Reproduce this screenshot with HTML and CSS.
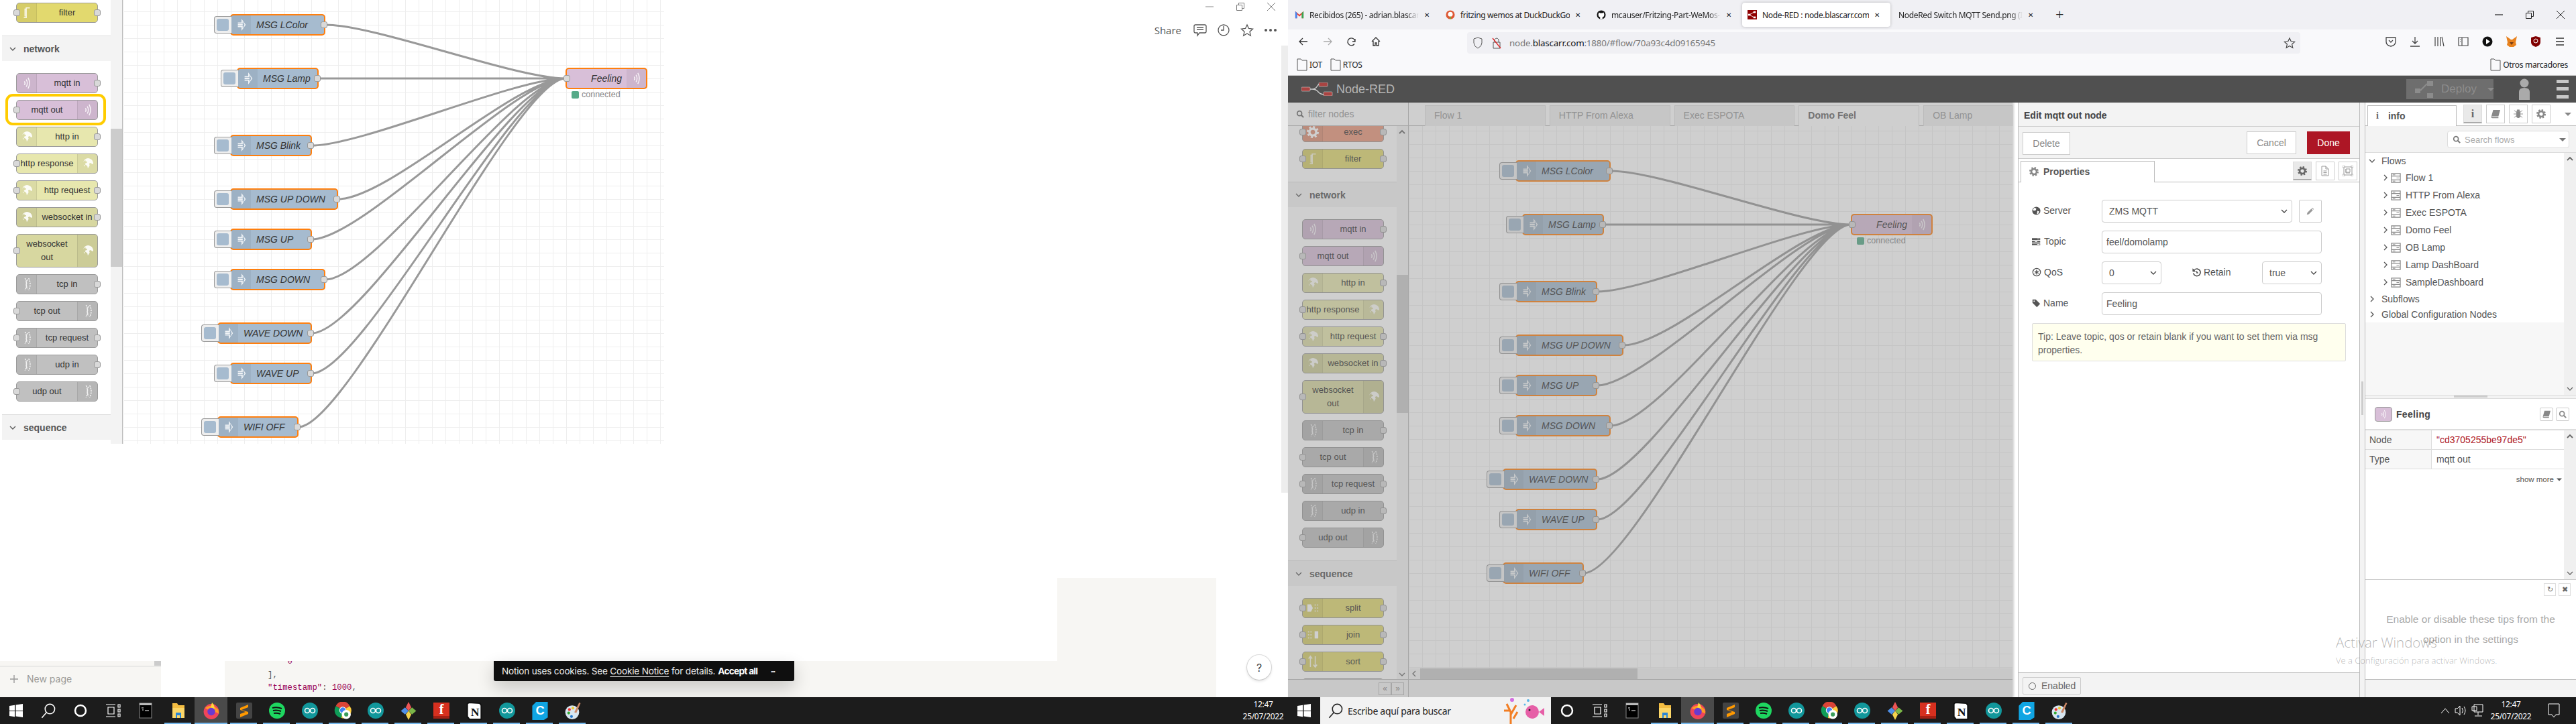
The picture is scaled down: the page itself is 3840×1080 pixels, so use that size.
FILE: index.html
```html
<!DOCTYPE html>
<html lang="en">
<head>
  <meta charset="UTF-8">
  <title>Node-RED : node.blascarr.com</title>
  <link rel="stylesheet" href="styles.css">
</head>
<body>
<svg class="defs" aria-hidden="true">
  <symbol id="wave" viewBox="0 0 20 30"><path d="M6 12q2 3 0 6M9 9q3.500 6 0 12M12 6q5 9 0 18" fill="none" stroke="#fff" stroke-width="1.600" opacity=".85"/></symbol>
  <symbol id="wave2" viewBox="0 0 20 30"><path d="M7 5q5 10 0 20M11 7q-4 8 0 16M13 5q5 10 0 20" fill="none" stroke="#fff" stroke-width="1.800" stroke-dasharray="2.500 1.500" opacity=".8"/></symbol>
  <symbol id="globe" viewBox="0 0 20 20"><path d="M10 1c5 0 9 4 9 9l-2 1-2-2-3 1 1 3-3 5-1-4-3-2-1-2 3-1 1-2-3-1 0-2q-3 2-4 5Q3 2 10 1zM3 12l2 1-1 2z" fill="#fff" opacity=".9"/></symbol>
  <symbol id="arrow" viewBox="0 0 20 30"><path d="M4 11h6V5l7 10-7 10v-6H4v-2h8v4l3-6-3-6v4H4z M4 14h8v2H4z" fill="#fff" opacity=".85"/></symbol>
  <symbol id="gear" viewBox="0 0 16 16"><circle cx="8" cy="8" r="4.500" fill="none" stroke="currentColor" stroke-width="3"/><circle cx="8" cy="8" r="6.500" fill="none" stroke="currentColor" stroke-width="3" stroke-dasharray="2.600 2.500"/></symbol>
  <symbol id="filt" viewBox="0 0 20 30"><path d="M5 23h4V7h6M9 9H7v12" fill="none" stroke="#fff" stroke-width="1.800" opacity=".8"/></symbol>
  <symbol id="splt" viewBox="0 0 20 20"><path d="M1 4h6l3 6-3 6H1z" fill="#fff"/><path d="M13 4h2v2h-2zM17 4h2v2h-2zM13 9h2v2h-2zM17 9h2v2h-2zM13 14h2v2h-2zM17 14h2v2h-2z" fill="#fff" opacity=".7"/></symbol>
  <symbol id="join" viewBox="0 0 20 20"><path d="M19 4h-6v12h6z" fill="#fff"/><path d="M2 4h2v2H2zM6 4h2v2H6zM2 9h2v2H2zM6 9h2v2H6zM2 14h2v2H2zM6 14h2v2H6z" fill="#fff" opacity=".7"/></symbol>
  <symbol id="sort" viewBox="0 0 20 30"><path d="M6 24V7M3 10l3-4 3 4M14 6v17M11 20l3 4 3-4" fill="none" stroke="#fff" stroke-width="1.800" opacity=".85"/></symbol>
  <symbol id="world" viewBox="0 0 16 16"><circle cx="8" cy="8" r="7.500" fill="currentColor"/><path d="M5 2l3 2-1 3-4 1-1-3zM10 8l3 1-1 4-3 1z" fill="#fff"/></symbol>
  <symbol id="tasks" viewBox="0 0 16 12"><path d="M0 0h14v3H0zM0 4.500h14v3H0zM0 9h14v3H0z" fill="currentColor"/><path d="M9 1h4v1H9zM5 5.500h4v1H5zM9 10h4v1H9z" fill="#fff"/></symbol>
  <symbol id="qos" viewBox="0 0 16 16"><circle cx="8" cy="8" r="6.500" fill="none" stroke="currentColor" stroke-width="1.500"/><path d="M8 4v8M4.500 6l7 4M11.500 6l-7 4" stroke="currentColor" stroke-width="1.600"/></symbol>
  <symbol id="hist" viewBox="0 0 16 16"><path d="M4 3a6.500 6.500 0 1 1-2 6" fill="none" stroke="currentColor" stroke-width="2"/><path d="M1 1v5h5z M8 5v4h3" fill="currentColor" stroke="currentColor" stroke-width="1"/></symbol>
  <symbol id="tag" viewBox="0 0 16 16"><path d="M1 1h6l8 8-6 6-8-8z" fill="currentColor"/><circle cx="4" cy="4" r="1.200" fill="#fff"/></symbol>
  <symbol id="pencil" viewBox="0 0 16 16"><path d="M1 15l1-4 8-8 3 3-8 8zM11 2l1-1 3 3-1 1z" fill="currentColor"/></symbol>
  <symbol id="doc" viewBox="0 0 14 16"><path d="M2 1h6l4 4v10H2zM8 1v4h4M4.500 8h5M4.500 10.500h5M4.500 13h5" fill="none" stroke="currentColor" stroke-width="1"/></symbol>
  <symbol id="frame" viewBox="0 0 16 16"><path d="M2 2h12v12H2zM5 5h6v5H5zM5 5v6h6" fill="none" stroke="currentColor" stroke-width="1"/><path d="M0 0h3v3H0zM13 0h3v3h-3zM0 13h3v3H0zM13 13h3v3h-3z" fill="#fff" stroke="currentColor" stroke-width=".800"/></symbol>
  <symbol id="book" viewBox="0 0 16 14"><path d="M4 0h12l-3 11H1zM1 11q-1 3 2 3h10v-2H3z" fill="currentColor"/></symbol>
  <symbol id="bug" viewBox="0 0 16 16"><path d="M5 4h6v9q-3 3-6 0zM6 1h4v2H6zM1 2l4 3M15 2l-4 3M0 8h5M16 8h-5M1 14l4-3M15 14l-4-3" fill="currentColor" stroke="currentColor"/></symbol>
  <symbol id="mag" viewBox="0 0 14 14"><circle cx="6" cy="6" r="4" fill="none" stroke="currentColor" stroke-width="2"/><path d="M9 9l4 4" stroke="currentColor" stroke-width="2.400"/></symbol>
  <symbol id="chev" viewBox="0 0 10 10"><path d="M1 3l4 4 4-4" fill="none" stroke="currentColor" stroke-width="1.300"/></symbol>
  <symbol id="chevr" viewBox="0 0 10 10"><path d="M3 1l4 4-4 4" fill="none" stroke="currentColor" stroke-width="1.300"/></symbol>
  <symbol id="chevu" viewBox="0 0 10 10"><path d="M1 7l4-4 4 4" fill="none" stroke="currentColor" stroke-width="1.800"/></symbol>
  <symbol id="caret" viewBox="0 0 10 10"><path d="M0 3h10L5 8z" fill="currentColor"/></symbol>
  <symbol id="fnode" viewBox="0 0 16 16"><path d="M1 1h14v14H1zM1 5h14M1 11h14" fill="none" stroke="currentColor" stroke-width="1.300"/><path d="M3 3h4M9 8h4M3 13h4" stroke="currentColor"/></symbol>
  <symbol id="folder" viewBox="0 0 16 20"><path d="M1 2h5l2 2h7v15H1z" fill="none" stroke="#555" stroke-width="1"/></symbol>
  <symbol id="win" viewBox="0 0 20 20"><path d="M0 3l8-1.200V10H0zM9.500 1.600L20 0v10H9.500zM0 11h8v8.200L0 18zM9.500 11H20v9L9.500 18.400z" fill="#fff"/></symbol>
  <symbol id="srch" viewBox="0 0 20 20"><circle cx="12" cy="8" r="6" fill="none" stroke="currentColor" stroke-width="1.300"/><path d="M8 12l-6 7" stroke="currentColor" stroke-width="1.300"/></symbol>
  <symbol id="cortana" viewBox="0 0 20 20"><circle cx="10" cy="10" r="8" fill="none" stroke="#fff" stroke-width="2.500"/></symbol>
  <symbol id="taskview" viewBox="0 0 24 20"><path d="M2 1h14M2 19h14M5 5h9v10H5zM20 1h3v4h-3zM20 8h3v4h-3zM20 15h3v4h-3z" fill="none" stroke="#fff" stroke-width="1.200"/></symbol>
  <symbol id="cmd" viewBox="0 0 20 24"><rect x="1" y="1" width="18" height="22" fill="#000" stroke="#888"/><rect x="1" y="1" width="18" height="3" fill="#bbb"/><path d="M4 8h3M5 11h2M9 12h6" stroke="#fff"/></symbol>
  <symbol id="explorer" viewBox="0 0 20 24"><path d="M1 1h7l2 3h9v19H1z" fill="#f3bd42"/><path d="M1 8h18v15H1z" fill="#fbd668"/><path d="M6 15h8v8h-2v-4H8v4H6z" fill="#2a86d6"/></symbol>
  <symbol id="firefox" viewBox="0 0 24 26"><circle cx="12" cy="14" r="11" fill="#f0455a"/><path d="M3 9q9-8 19 2l1 6q-5-3-8-2z" fill="#ff9a24"/><path d="M13 1q5 5 3 10l-5-3z" fill="#ffd53a"/><circle cx="12" cy="14" r="5.500" fill="#6a3ad0"/></symbol>
  <symbol id="sublime" viewBox="0 0 24 24"><rect width="24" height="24" rx="2" fill="#444"/><path d="M6 10l12-5v4L8 13l10 3v3L6 24v-5l8-3-8-3z" fill="#f90" transform="translate(0 -2)"/></symbol>
  <symbol id="spotify" viewBox="0 0 24 24"><circle cx="12" cy="12" r="12" fill="#1ed760"/><path d="M5 8q7-2 14 1M6 12q6-1.500 12 1M7 16q5-1 10 1" fill="none" stroke="#111" stroke-width="2"/></symbol>
  <symbol id="arduino" viewBox="0 0 24 24"><circle cx="12" cy="12" r="12" fill="#12979b"/><circle cx="8" cy="12" r="3.500" fill="none" stroke="#fff" stroke-width="1.600"/><circle cx="16" cy="12" r="3.500" fill="none" stroke="#fff" stroke-width="1.600"/></symbol>
  <symbol id="chrome" viewBox="0 0 24 26"><path d="M12 12L2 6a11 11 0 0 1 20 0z" fill="#db4437"/><path d="M12 12L2 6a11 11 0 0 0 8 17z" fill="#0f9d58"/><path d="M12 12l10-6a11 11 0 0 1-12 17z" fill="#ffcd40"/><circle cx="12" cy="12" r="4.500" fill="#4285f4" stroke="#fff"/><circle cx="17" cy="18" r="6.500" fill="#fff"/><circle cx="17" cy="18" r="3" fill="#3a9c5a"/></symbol>
  <symbol id="git" viewBox="0 0 24 26"><path d="M12 0l4 8-4 5-4-5z" fill="#e55"/><path d="M12 13l5-5 6 5-6 5z" fill="#7ab648"/><path d="M12 13l-5-5-6 5 6 5z" fill="#4f90e8"/><path d="M12 13l4 5-4 8-4-8z" fill="#f5d34e"/></symbol>
  <symbol id="paint" viewBox="0 0 24 26"><ellipse cx="11" cy="15" rx="10" ry="10" fill="#d8e6f0"/><circle cx="7" cy="11" r="2" fill="#e33"/><circle cx="12" cy="9" r="2" fill="#ec3"/><circle cx="6" cy="16" r="2" fill="#3a3"/><circle cx="10" cy="21" r="2" fill="#27c"/><path d="M21 1l2 1-6 14-3-1z" fill="#c86"/></symbol>
  <symbol id="nrlogo" viewBox="0 0 47 20"><path d="M11 10h5q5 0 8-5t6-4M16 10q6 0 9 4t10 4" fill="none" stroke="#ccc" stroke-width="1.400"/><rect x="0" y="7" width="13" height="6" rx="1" fill="#a94442" stroke="#ccc" stroke-width=".600"/><rect x="26" y="0" width="13" height="6" rx="1" fill="#a94442" stroke="#ccc" stroke-width=".600"/><rect x="33" y="14" width="13" height="6" rx="1" fill="#a94442" stroke="#ccc" stroke-width=".600"/></symbol>
</svg>

<div class="screen">

  <!-- left half: notion window with the pasted picture -->
  <section class="half">
    <div class="left">
      <div class="left-upper">
        <div class="shot">
          <div class="palette">
            <div class="pal-body">
              <div class="pal-list">
                <div class="pal-group pal-first">
                  <div class="pn pn-filter"><span class="pn-ico"><svg class="ic28"><use href="#filt"/></svg></span><span class="pn-lab">filter</span><i class="port pl"></i><i class="port pr"></i></div>
                </div>
                <div class="pal-head"><svg class="ic10"><use href="#chev"/></svg>network</div>
                <div class="pal-group">
                  <div class="pn pn-mqtt"><span class="pn-ico"><svg class="ic28"><use href="#wave"/></svg></span><span class="pn-lab">mqtt in</span><i class="port pr"></i></div>
                  <div class="pn pn-mqtt pn-flip"><span class="pn-ico"><svg class="ic28"><use href="#wave"/></svg></span><span class="pn-lab">mqtt out</span><i class="port pl"></i></div>
                  <div class="pn pn-http"><span class="pn-ico"><svg class="ic20"><use href="#globe"/></svg></span><span class="pn-lab">http in</span><i class="port pr"></i></div>
                  <div class="pn pn-http pn-flip"><span class="pn-ico"><svg class="ic20"><use href="#globe"/></svg></span><span class="pn-lab">http response</span><i class="port pl"></i></div>
                  <div class="pn pn-http"><span class="pn-ico"><svg class="ic20"><use href="#globe"/></svg></span><span class="pn-lab">http request</span><i class="port pl"></i><i class="port pr"></i></div>
                  <div class="pn pn-ws"><span class="pn-ico"><svg class="ic20"><use href="#globe"/></svg></span><span class="pn-lab">websocket in</span><i class="port pr"></i></div>
                  <div class="pn pn-ws pn-flip pn-tall"><span class="pn-ico"><svg class="ic20"><use href="#globe"/></svg></span><span class="pn-lab">websocket<br>out</span><i class="port pl"></i></div>
                  <div class="pn pn-tcp"><span class="pn-ico"><svg class="ic28"><use href="#wave2"/></svg></span><span class="pn-lab">tcp in</span><i class="port pr"></i></div>
                  <div class="pn pn-tcp pn-flip"><span class="pn-ico"><svg class="ic28"><use href="#wave2"/></svg></span><span class="pn-lab">tcp out</span><i class="port pl"></i></div>
                  <div class="pn pn-tcp"><span class="pn-ico"><svg class="ic28"><use href="#wave2"/></svg></span><span class="pn-lab">tcp request</span><i class="port pl"></i><i class="port pr"></i></div>
                  <div class="pn pn-tcp"><span class="pn-ico"><svg class="ic28"><use href="#wave2"/></svg></span><span class="pn-lab">udp in</span><i class="port pr"></i></div>
                  <div class="pn pn-tcp pn-flip"><span class="pn-ico"><svg class="ic28"><use href="#wave2"/></svg></span><span class="pn-lab">udp out</span><i class="port pl"></i></div>
                </div>
                <div class="pal-head"><svg class="ic10"><use href="#chev"/></svg>sequence</div>
              </div>
              <div class="pal-scroll"><span class="pal-thumb pal-thumb-l"></span></div>
            </div>
          </div>
          <div class="flow-wrap flow-wrap-l">
            <div class="flow flow-white">
              <svg class="wires" width="900" height="809">
                <path d="M301 67C376 67 584 147 659 147M291 147H659M281 247C356 247 584 147 659 147M320 327C395 327 584 147 659 147M281 387C356 387 584 147 659 147M301 447C376 447 584 147 659 147M281 527C356 527 584 147 659 147M281 587C356 587 584 147 659 147M261 667C336 667 584 147 659 147"/>
              </svg>
              <div class="fn" style="left:159px;top:51px;width:142px"><b class="fn-btn"><i></i></b><span class="fn-ico"><svg class="ic28"><use href="#arrow"/></svg></span><span class="fn-lab">MSG LColor</span><i class="port pr"></i></div>
              <div class="fn" style="left:169px;top:131px;width:122px"><b class="fn-btn"><i></i></b><span class="fn-ico"><svg class="ic28"><use href="#arrow"/></svg></span><span class="fn-lab">MSG Lamp</span><i class="port pr"></i></div>
              <div class="fn" style="left:159px;top:231px;width:122px"><b class="fn-btn"><i></i></b><span class="fn-ico"><svg class="ic28"><use href="#arrow"/></svg></span><span class="fn-lab">MSG Blink</span><i class="port pr"></i></div>
              <div class="fn" style="left:159px;top:311px;width:161px"><b class="fn-btn"><i></i></b><span class="fn-ico"><svg class="ic28"><use href="#arrow"/></svg></span><span class="fn-lab">MSG UP DOWN</span><i class="port pr"></i></div>
              <div class="fn" style="left:159px;top:371px;width:122px"><b class="fn-btn"><i></i></b><span class="fn-ico"><svg class="ic28"><use href="#arrow"/></svg></span><span class="fn-lab">MSG UP</span><i class="port pr"></i></div>
              <div class="fn" style="left:159px;top:431px;width:142px"><b class="fn-btn"><i></i></b><span class="fn-ico"><svg class="ic28"><use href="#arrow"/></svg></span><span class="fn-lab">MSG DOWN</span><i class="port pr"></i></div>
              <div class="fn" style="left:140px;top:511px;width:141px"><b class="fn-btn"><i></i></b><span class="fn-ico"><svg class="ic28"><use href="#arrow"/></svg></span><span class="fn-lab">WAVE DOWN</span><i class="port pr"></i></div>
              <div class="fn" style="left:159px;top:571px;width:122px"><b class="fn-btn"><i></i></b><span class="fn-ico"><svg class="ic28"><use href="#arrow"/></svg></span><span class="fn-lab">WAVE UP</span><i class="port pr"></i></div>
              <div class="fn" style="left:140px;top:651px;width:121px"><b class="fn-btn"><i></i></b><span class="fn-ico"><svg class="ic28"><use href="#arrow"/></svg></span><span class="fn-lab">WIFI OFF</span><i class="port pr"></i></div>
              <div class="fn fn-out" style="left:659px;top:131px;width:122px"><span class="fn-lab">Feeling</span><span class="fn-ico"><svg class="ic28"><use href="#wave"/></svg></span><i class="port pl"></i></div>
              <div class="fn-status" style="left:668px;top:165px"><i></i>connected</div>
            </div>
          </div>
          <div class="mark"></div>
        </div>
        <div class="n-top">
          <div class="n-win">
            <svg width="16" height="16"><path d="M2 8h12" stroke="#888"/></svg>
            <svg width="16" height="16"><path d="M2.500 5.500h8v8h-8zM5.500 5V2.500h8v8H11" fill="none" stroke="#777"/></svg>
            <svg width="16" height="16"><path d="M2 2l12 12M14 2L2 14" stroke="#777"/></svg>
          </div>
          <div class="n-bar">
            <span class="n-share">Share</span>
            <svg width="20" height="20" viewBox="0 0 20 20"><path d="M3 2h14q2 0 2 2v8q0 2-2 2H9l-3 4v-4H3q-2 0-2-2V4q0-2 2-2zM5 6h10M5 9h10" fill="none" stroke="#555" stroke-width="1.300"/></svg>
            <svg width="20" height="20" viewBox="0 0 20 20"><circle cx="10" cy="10" r="8" fill="none" stroke="#555" stroke-width="1.300"/><path d="M10 4v6H6" fill="none" stroke="#555" stroke-width="1.300"/></svg>
            <svg width="20" height="20" viewBox="0 0 20 20"><path d="M10 2l2.500 5.500 6 .7-4.500 4 1.300 6L10 15l-5.300 3.200 1.300-6-4.500-4 6-.7z" fill="none" stroke="#555" stroke-width="1.300"/></svg>
            <svg width="20" height="20" viewBox="0 0 20 20"><circle cx="3" cy="10" r="2" fill="#555"/><circle cx="10" cy="10" r="2" fill="#555"/><circle cx="17" cy="10" r="2" fill="#555"/></svg>
          </div>
        </div>
      </div>
      <div class="left-mid"><span class="n-box"></span></div>
      <div class="left-lower">
        <div class="n-side">
          <div class="n-side-top"><span></span></div>
          <div class="n-new"><svg width="14" height="14"><path d="M7 1v12M1 7h12" stroke="#999" stroke-width="1.400"/></svg>New page</div>
        </div>
        <div class="n-code"><code class="mag">    0</code><code>],</code><code><span class="mag">"timestamp"</span>: <span class="mag">1000</span>,</code></div>
      </div>
      <div class="n-cookie">Notion uses cookies. See <u>Cookie Notice</u> for details.<b>Accept all</b><em>•••</em></div>
      <div class="n-help">?</div>
      <div class="n-scroll"></div>
    </div>
    <div class="taskbar">
      <span class="tb tb-w"><svg class="t20"><use href="#win"/></svg></span>
      <span class="tb tb-w tb-w-s"><svg class="t24"><use href="#srch"/></svg></span>
      <span class="tb tb-w"><svg class="t20"><use href="#cortana"/></svg></span>
      <span class="tb tb-w"><svg class="t24"><use href="#taskview"/></svg></span>
      <span class="tb"><svg class="t24"><use href="#cmd"/></svg></span>
      <span class="tb on"><svg class="t24"><use href="#explorer"/></svg></span>
      <span class="tb on act"><svg class="t26"><use href="#firefox"/></svg></span>
      <span class="tb on"><svg class="t24"><use href="#sublime"/></svg></span>
      <span class="tb on"><svg class="t24"><use href="#spotify"/></svg></span>
      <span class="tb on"><svg class="t24"><use href="#arduino"/></svg></span>
      <span class="tb on"><svg class="t26"><use href="#chrome"/></svg></span>
      <span class="tb on"><svg class="t24"><use href="#arduino"/></svg></span>
      <span class="tb on"><svg class="t26"><use href="#git"/></svg></span>
      <span class="tb on"><svg class="t24" viewBox="0 0 24 24"><rect width="24" height="24" fill="#d7301f"/><rect y="20" width="24" height="4" fill="#a32014"/><text x="12" y="17" class="sy-f">f</text></svg></span>
      <span class="tb on"><svg class="t26" viewBox="0 0 24 26"><path d="M4 1l16 1 2 3v20H5L2 21V3z" fill="#fff" stroke="#111" stroke-width="2"/><text x="13" y="20" class="sy-n">N</text></svg></span>
      <span class="tb on"><svg class="t24"><use href="#arduino"/></svg></span>
      <span class="tb on"><svg class="t26" viewBox="0 0 24 28"><path d="M6 0h18v24l-6 4H0V6z" fill="#10a5e3"/><text x="12" y="20" class="sy-c">C</text></svg></span>
      <span class="tb on"><svg class="t26"><use href="#paint"/></svg></span>
      <div class="clock clock-l"><span>12:47</span><span>25/07/2022</span></div>
    </div>
  </section>

  <!-- right half: firefox with node-red -->
  <section class="half half-r">
    <div class="ff-tabs">
      <div class="tab"><svg class="fav" viewBox="0 0 16 16"><path d="M1 14V2l7 6 7-6v12h-3V7L8 11 4 7v7z" fill="#ea4335"/><path d="M1 14V2l3 3v9z" fill="#4285f4"/><path d="M12 14V5l3-3v12z" fill="#34a853"/></svg><span class="tab-t">Recibidos (265) - adrian.blascar</span><span class="tab-x">✕</span></div>
      <div class="tab"><svg class="fav" viewBox="0 0 16 16"><circle cx="8" cy="8" r="7.500" fill="#de5833"/><circle cx="8" cy="7" r="4" fill="#fff"/><path d="M7 11h2v4H7z" fill="#6b3"/></svg><span class="tab-t tab-full">fritzing wemos at DuckDuckGo</span><span class="tab-x">✕</span></div>
      <div class="tab"><svg class="fav" viewBox="0 0 16 16"><circle cx="8" cy="8" r="7.500" fill="#111"/><path d="M6 15v-3q-3 0-3-5l1-3 2 1h4l2-1 1 3q0 5-3 5v3z" fill="#fff"/></svg><span class="tab-t">mcauser/Fritzing-Part-WeMos-D</span><span class="tab-x">✕</span></div>
      <div class="tab tab-on"><svg class="fav" viewBox="0 0 16 16"><rect width="16" height="16" fill="#8f0000"/><path d="M3 8l9-5M3 8l9 5" stroke="#fff"/><rect x="1" y="6.500" width="4" height="3" fill="#fff"/><rect x="10" y="2" width="4" height="3" fill="#fff"/><rect x="10" y="11" width="4" height="3" fill="#fff"/></svg><span class="tab-t tab-full">Node-RED : node.blascarr.com</span><span class="tab-x">✕</span></div>
      <div class="tab"><span class="tab-t">NodeRed Switch MQTT Send.png (In</span><span class="tab-x">✕</span></div>
      <span class="tab-add">+</span>
      <div class="ff-win">
        <svg width="16" height="16"><path d="M2 8h12" stroke="#222" stroke-width="1.200"/></svg>
        <svg width="16" height="16"><path d="M2.500 5.500h8v8h-8zM5.500 5V2.500h8v8H11" fill="none" stroke="#222"/></svg>
        <svg width="16" height="16"><path d="M2 2l12 12M14 2L2 14" stroke="#222"/></svg>
      </div>
    </div>
    <div class="ff-bar">
      <span class="ff-b"><svg width="16" height="16"><path d="M14 8H2M7 3L2 8l5 5" fill="none" stroke="#333" stroke-width="1.300"/></svg></span>
      <span class="ff-b"><svg width="16" height="16"><path d="M2 8h12M9 3l5 5-5 5" fill="none" stroke="#aaa" stroke-width="1.300"/></svg></span>
      <span class="ff-b"><svg width="16" height="16"><path d="M13 4v4H9M13 8a5.500 5.500 0 1 0-1 3.500" fill="none" stroke="#333" stroke-width="1.300"/></svg></span>
      <span class="ff-b"><svg width="16" height="16"><path d="M2 8l6-6 6 6M4 7v7h3v-4h2v4h3V7" fill="none" stroke="#333" stroke-width="1.300"/></svg></span>
      <div class="ff-url">
        <svg width="16" height="18" viewBox="0 0 16 18"><path d="M8 1l6 2v6q0 5-6 8-6-3-6-8V3z" fill="none" stroke="#555"/></svg>
        <svg width="16" height="18" viewBox="0 0 16 18"><path d="M3 8h10v9H3zM5 8V4q3-4 6 0v4" fill="none" stroke="#555"/><path d="M2 2l12 15" stroke="#d22" stroke-width="1.300"/></svg>
        <span class="ff-addr"><span class="ff-g">node.</span>blascarr.com<span class="ff-g">:1880/#flow/70a93c4d09165945</span></span>
        <svg class="ff-star" width="18" height="18" viewBox="0 0 20 20"><path d="M10 2l2.500 5.500 6 .7-4.500 4 1.300 6L10 15l-5.300 3.200 1.300-6-4.500-4 6-.7z" fill="none" stroke="#444" stroke-width="1.300"/></svg>
      </div>
      <div class="ff-exts">
        <span class="ff-b"><svg width="16" height="16"><path d="M1 2h14v6q0 6-7 7-7-1-7-7zM5 6l3 3 3-3" fill="none" stroke="#444" stroke-width="1.300"/></svg></span>
        <span class="ff-b"><svg width="16" height="16"><path d="M8 1v9M4 7l4 4 4-4M1 15h14" fill="none" stroke="#444" stroke-width="1.300"/></svg></span>
        <span class="ff-b"><svg width="16" height="16"><path d="M2 1v14M6 1v14M10 1v14M12 1l3 14" fill="none" stroke="#444" stroke-width="1.200"/></svg></span>
        <span class="ff-b"><svg width="16" height="16"><path d="M1 2h14v12H1zM6 2v12M3 5h1M3 8h1" fill="none" stroke="#444" stroke-width="1.200"/></svg></span>
        <span class="ff-b"><svg width="16" height="16"><circle cx="8" cy="8" r="7.500" fill="#111"/><path d="M6 4l6 4-6 4z" fill="#fff"/></svg></span>
        <span class="ff-b"><svg width="18" height="18"><path d="M1 1l7 5h2l7-5-2 9 1 4-4 3H6l-4-3 1-4z" fill="#e8821e"/><path d="M6 10l3 4 3-4z" fill="#763d16"/></svg></span>
        <span class="ff-b"><svg width="18" height="18"><path d="M9 1l7 2v7q0 5-7 7-7-2-7-7V3z" fill="#800000"/><circle cx="9" cy="8" r="3" fill="none" stroke="#fff"/></svg></span>
        <span class="ff-b"><svg width="16" height="16"><path d="M2 3h12M2 8h12M2 13h12" stroke="#333" stroke-width="1.300"/></svg></span>
      </div>
    </div>
    <div class="ff-marks">
      <span class="bm"><svg width="16" height="20"><use href="#folder"/></svg>IOT</span>
      <span class="bm"><svg width="16" height="20"><use href="#folder"/></svg>RTOS</span>
      <span class="bm bm-end"><svg width="16" height="20"><use href="#folder"/></svg>Otros marcadores</span>
    </div>

    <div class="nr-head">
      <svg class="nr-logo"><use href="#nrlogo"/></svg>
      <span class="nr-name">Node-RED</span>
      <div class="nr-deploy">
        <svg width="28" height="30" viewBox="0 0 28 30"><path d="M1 14h8v7H1zM19 3h9v7h-9zM19 21h9v7h-9z" fill="#8c8c8c"/><path d="M9 17l10-10" stroke="#8c8c8c" stroke-width="2"/></svg>
        <span>Deploy</span><svg class="ic10"><use href="#caret"/></svg>
      </div>
      <svg class="nr-user" width="18" height="36" viewBox="0 0 18 36"><circle cx="9" cy="9" r="6.500" fill="#aaa"/><path d="M1 34V22q0-6 8-6t8 6v12z" fill="#aaa"/></svg>
      <svg class="nr-menu" width="18" height="30" viewBox="0 0 18 30"><path d="M0 1h18v5H0zM0 12h18v5H0zM0 24h18v5H0z" fill="#c8c8c8"/></svg>
    </div>

    <div class="nr-main">
      <div class="workspace">
        <div class="palette palette-r">
          <div class="pal-search"><svg class="ic12"><use href="#mag"/></svg>filter nodes</div>
          <div class="pal-body">
            <div class="pal-list pal-list-r">
              <div class="pal-group pal-first">
                <div class="pn pn-exec"><span class="pn-ico"><svg class="ic20 white"><use href="#gear"/></svg></span><span class="pn-lab">exec</span><i class="port pl"></i><i class="port pr"></i></div>
                <div class="pn pn-filter"><span class="pn-ico"><svg class="ic28"><use href="#filt"/></svg></span><span class="pn-lab">filter</span><i class="port pl"></i><i class="port pr"></i></div>
              </div>
              <div class="pal-head"><svg class="ic10"><use href="#chev"/></svg>network</div>
              <div class="pal-group">
                <div class="pn pn-mqtt"><span class="pn-ico"><svg class="ic28"><use href="#wave"/></svg></span><span class="pn-lab">mqtt in</span><i class="port pr"></i></div>
                <div class="pn pn-mqtt pn-flip"><span class="pn-ico"><svg class="ic28"><use href="#wave"/></svg></span><span class="pn-lab">mqtt out</span><i class="port pl"></i></div>
                <div class="pn pn-http"><span class="pn-ico"><svg class="ic20"><use href="#globe"/></svg></span><span class="pn-lab">http in</span><i class="port pr"></i></div>
                <div class="pn pn-http pn-flip"><span class="pn-ico"><svg class="ic20"><use href="#globe"/></svg></span><span class="pn-lab">http response</span><i class="port pl"></i></div>
                <div class="pn pn-http"><span class="pn-ico"><svg class="ic20"><use href="#globe"/></svg></span><span class="pn-lab">http request</span><i class="port pl"></i><i class="port pr"></i></div>
                <div class="pn pn-ws"><span class="pn-ico"><svg class="ic20"><use href="#globe"/></svg></span><span class="pn-lab">websocket in</span><i class="port pr"></i></div>
                <div class="pn pn-ws pn-flip pn-tall"><span class="pn-ico"><svg class="ic20"><use href="#globe"/></svg></span><span class="pn-lab">websocket<br>out</span><i class="port pl"></i></div>
                <div class="pn pn-tcp"><span class="pn-ico"><svg class="ic28"><use href="#wave2"/></svg></span><span class="pn-lab">tcp in</span><i class="port pr"></i></div>
                <div class="pn pn-tcp pn-flip"><span class="pn-ico"><svg class="ic28"><use href="#wave2"/></svg></span><span class="pn-lab">tcp out</span><i class="port pl"></i></div>
                <div class="pn pn-tcp"><span class="pn-ico"><svg class="ic28"><use href="#wave2"/></svg></span><span class="pn-lab">tcp request</span><i class="port pl"></i><i class="port pr"></i></div>
                <div class="pn pn-tcp"><span class="pn-ico"><svg class="ic28"><use href="#wave2"/></svg></span><span class="pn-lab">udp in</span><i class="port pr"></i></div>
                <div class="pn pn-tcp pn-flip"><span class="pn-ico"><svg class="ic28"><use href="#wave2"/></svg></span><span class="pn-lab">udp out</span><i class="port pl"></i></div>
              </div>
              <div class="pal-head"><svg class="ic10"><use href="#chev"/></svg>sequence</div>
              <div class="pal-group">
                <div class="pn pn-filter"><span class="pn-ico"><svg class="ic20"><use href="#splt"/></svg></span><span class="pn-lab">split</span><i class="port pl"></i><i class="port pr"></i></div>
                <div class="pn pn-filter"><span class="pn-ico"><svg class="ic20"><use href="#join"/></svg></span><span class="pn-lab">join</span><i class="port pl"></i><i class="port pr"></i></div>
                <div class="pn pn-filter"><span class="pn-ico"><svg class="ic28"><use href="#sort"/></svg></span><span class="pn-lab">sort</span><i class="port pl"></i><i class="port pr"></i></div>
                <div class="pn pn-filter"></div>
              </div>
            </div>
            <div class="pal-scroll">
              <svg class="ic10 pal-up"><use href="#chevu"/></svg>
              <span class="pal-thumb pal-thumb-r"></span>
              <svg class="ic10 pal-down"><use href="#chev"/></svg>
            </div>
          </div>
          <div class="pal-foot"><span class="pal-fbtn">«</span><span class="pal-fbtn">»</span></div>
        </div>

        <div class="canvas">
          <div class="wtabs">
            <span class="wtab">Flow 1</span>
            <span class="wtab">HTTP From Alexa</span>
            <span class="wtab">Exec ESPOTA</span>
            <span class="wtab wtab-on">Domo Feel</span>
            <span class="wtab wtab-cut">OB Lamp</span>
          </div>
          <div class="flow-wrap">
            <div class="flow">
              <svg class="wires" width="900" height="809">
                <path d="M301 67C376 67 584 147 659 147M291 147H659M281 247C356 247 584 147 659 147M320 327C395 327 584 147 659 147M281 387C356 387 584 147 659 147M301 447C376 447 584 147 659 147M281 527C356 527 584 147 659 147M281 587C356 587 584 147 659 147M261 667C336 667 584 147 659 147"/>
              </svg>
              <div class="fn" style="left:159px;top:51px;width:142px"><b class="fn-btn"><i></i></b><span class="fn-ico"><svg class="ic28"><use href="#arrow"/></svg></span><span class="fn-lab">MSG LColor</span><i class="port pr"></i></div>
              <div class="fn" style="left:169px;top:131px;width:122px"><b class="fn-btn"><i></i></b><span class="fn-ico"><svg class="ic28"><use href="#arrow"/></svg></span><span class="fn-lab">MSG Lamp</span><i class="port pr"></i></div>
              <div class="fn" style="left:159px;top:231px;width:122px"><b class="fn-btn"><i></i></b><span class="fn-ico"><svg class="ic28"><use href="#arrow"/></svg></span><span class="fn-lab">MSG Blink</span><i class="port pr"></i></div>
              <div class="fn" style="left:159px;top:311px;width:161px"><b class="fn-btn"><i></i></b><span class="fn-ico"><svg class="ic28"><use href="#arrow"/></svg></span><span class="fn-lab">MSG UP DOWN</span><i class="port pr"></i></div>
              <div class="fn" style="left:159px;top:371px;width:122px"><b class="fn-btn"><i></i></b><span class="fn-ico"><svg class="ic28"><use href="#arrow"/></svg></span><span class="fn-lab">MSG UP</span><i class="port pr"></i></div>
              <div class="fn" style="left:159px;top:431px;width:142px"><b class="fn-btn"><i></i></b><span class="fn-ico"><svg class="ic28"><use href="#arrow"/></svg></span><span class="fn-lab">MSG DOWN</span><i class="port pr"></i></div>
              <div class="fn" style="left:140px;top:511px;width:141px"><b class="fn-btn"><i></i></b><span class="fn-ico"><svg class="ic28"><use href="#arrow"/></svg></span><span class="fn-lab">WAVE DOWN</span><i class="port pr"></i></div>
              <div class="fn" style="left:159px;top:571px;width:122px"><b class="fn-btn"><i></i></b><span class="fn-ico"><svg class="ic28"><use href="#arrow"/></svg></span><span class="fn-lab">WAVE UP</span><i class="port pr"></i></div>
              <div class="fn" style="left:140px;top:651px;width:121px"><b class="fn-btn"><i></i></b><span class="fn-ico"><svg class="ic28"><use href="#arrow"/></svg></span><span class="fn-lab">WIFI OFF</span><i class="port pr"></i></div>
              <div class="fn fn-out" style="left:659px;top:131px;width:122px"><span class="fn-lab">Feeling</span><span class="fn-ico"><svg class="ic28"><use href="#wave"/></svg></span><i class="port pl"></i></div>
              <div class="fn-status" style="left:668px;top:165px"><i></i>connected</div>
            </div>
          </div>
          <div class="hscroll"><svg class="ic10"><use href="#chevr" transform="rotate(180 5 5)"/></svg><span></span></div>
          <div class="wfoot"></div>
        </div>
        <div class="shade"></div>
      </div>

      <div class="tray">
        <div class="tray-title">Edit mqtt out node</div>
        <div class="tray-tools">
          <button class="btn btn-del">Delete</button>
          <button class="btn btn-can">Cancel</button>
          <button class="btn btn-done">Done</button>
        </div>
        <div class="tray-tabs">
          <span class="ttab"><svg class="ic14 c-g"><use href="#gear"/></svg>Properties</span>
          <span class="tico tico-on"><svg class="ic14"><use href="#gear"/></svg></span>
          <span class="tico"><svg class="ic16 c-l"><use href="#doc"/></svg></span>
          <span class="tico"><svg class="ic16 c-l"><use href="#frame"/></svg></span>
        </div>
        <div class="tray-body">
          <div class="frow">
            <label><svg class="ic13"><use href="#world"/></svg>Server</label>
            <div class="sel sel-server">ZMS MQTT<svg class="ic10"><use href="#chev"/></svg></div>
            <span class="edit"><svg class="ic12 c-l"><use href="#pencil"/></svg></span>
          </div>
          <div class="frow">
            <label><svg class="ic14b"><use href="#tasks"/></svg>Topic</label>
            <input class="inp" value="feel/domolamp">
          </div>
          <div class="frow">
            <label><svg class="ic14"><use href="#qos"/></svg>QoS</label>
            <div class="sel sel-sm">0<svg class="ic10"><use href="#chev"/></svg></div>
            <label class="lab-ret"><svg class="ic13"><use href="#hist"/></svg>Retain</label>
            <div class="sel sel-sm">true<svg class="ic10"><use href="#chev"/></svg></div>
          </div>
          <div class="frow">
            <label><svg class="ic13"><use href="#tag"/></svg>Name</label>
            <input class="inp" value="Feeling">
          </div>
          <div class="tip">Tip: Leave topic, qos or retain blank if you want to set them via msg properties.</div>
        </div>
        <div class="tray-foot"><span class="en-btn"><i></i>Enabled</span></div>
      </div>

      <div class="side-sep"><span></span></div>

      <div class="sidebar">
        <div class="sb-tabs">
          <span class="sb-tab"><b class="i-i">i</b>info</span>
          <span class="tico tico-on tico-i"><b class="i-i">i</b></span>
          <span class="tico"><svg class="ic14 c-m"><use href="#book"/></svg></span>
          <span class="tico"><svg class="ic14 c-m"><use href="#bug"/></svg></span>
          <span class="tico"><svg class="ic14 c-m"><use href="#gear"/></svg></span>
          <svg class="ic10 sb-caret"><use href="#caret"/></svg>
        </div>
        <div class="sb-search">
          <div class="sb-box"><svg class="ic12"><use href="#mag"/></svg>Search flows<svg class="ic10 sb-caret2"><use href="#caret"/></svg></div>
        </div>
        <div class="sb-tree">
          <div class="tree">
            <div class="t-top"><svg class="ic10"><use href="#chev"/></svg>Flows</div>
            <div class="t-flow"><svg class="ic10"><use href="#chevr"/></svg><svg class="ic15"><use href="#fnode"/></svg>Flow 1</div>
            <div class="t-flow"><svg class="ic10"><use href="#chevr"/></svg><svg class="ic15"><use href="#fnode"/></svg>HTTP From Alexa</div>
            <div class="t-flow"><svg class="ic10"><use href="#chevr"/></svg><svg class="ic15"><use href="#fnode"/></svg>Exec ESPOTA</div>
            <div class="t-flow"><svg class="ic10"><use href="#chevr"/></svg><svg class="ic15"><use href="#fnode"/></svg>Domo Feel</div>
            <div class="t-flow"><svg class="ic10"><use href="#chevr"/></svg><svg class="ic15"><use href="#fnode"/></svg>OB Lamp</div>
            <div class="t-flow"><svg class="ic10"><use href="#chevr"/></svg><svg class="ic15"><use href="#fnode"/></svg>Lamp DashBoard</div>
            <div class="t-flow"><svg class="ic10"><use href="#chevr"/></svg><svg class="ic15"><use href="#fnode"/></svg>SampleDashboard</div>
            <div class="t-top"><svg class="ic10"><use href="#chevr"/></svg>Subflows</div>
            <div class="t-top"><svg class="ic10"><use href="#chevr"/></svg>Global Configuration Nodes</div>
          </div>
          <div class="sb-vs"><svg class="ic10"><use href="#chevu"/></svg><svg class="ic10"><use href="#chev"/></svg></div>
        </div>
        <div class="sb-split"><span></span></div>
        <div class="sb-nhead">
          <span class="sb-nico"><svg class="ic28"><use href="#wave"/></svg></span>
          <b>Feeling</b>
          <span class="sb-nbtn"><svg class="ic12 c-m"><use href="#book"/></svg></span>
          <span class="sb-nbtn"><svg class="ic12 c-m"><use href="#mag"/></svg></span>
        </div>
        <div class="sb-props">
          <div class="props">
            <div class="prow"><span>Node</span><span class="red">"cd3705255be97de5"</span></div>
            <div class="prow"><span>Type</span><span>mqtt out</span></div>
            <div class="more">show more <svg class="ic8"><use href="#caret"/></svg></div>
          </div>
          <div class="sb-vs"><svg class="ic10"><use href="#chevu"/></svg><svg class="ic10"><use href="#chev"/></svg></div>
        </div>
        <div class="sb-tips">
          <div class="tips-btns"><span>↻</span><span>✖</span></div>
          <p>Enable or disable these tips from the<br>option in the settings</p>
        </div>
        <div class="sb-foot"></div>
      </div>
    </div>

    <div class="taskbar">
      <span class="tb tb-w"><svg class="t20"><use href="#win"/></svg></span>
      <div class="tb-search"><svg class="t24"><use href="#srch"/></svg><span>Escribe aquí para buscar</span>
        <svg class="tb-coral" width="64" height="40" viewBox="0 0 64 40"><path d="M14 40V22L8 10M14 26l8-14M14 20L4 20M18 32l6-10" fill="none" stroke="#f27e24" stroke-width="3"/><circle cx="46" cy="22" r="10" fill="#e65fa7"/><path d="M56 22l8-6v12z" fill="#e65fa7"/><circle cx="42" cy="19" r="1.500" fill="#222"/><circle cx="16" cy="4" r="3" fill="#d36fe0"/><circle cx="40" cy="5" r="2" fill="#5cb8e8"/><circle cx="35" cy="11" r="1.500" fill="#5cb8e8"/></svg>
      </div>
      <span class="tb tb-w"><svg class="t20"><use href="#cortana"/></svg></span>
      <span class="tb tb-w"><svg class="t24"><use href="#taskview"/></svg></span>
      <span class="tb"><svg class="t24"><use href="#cmd"/></svg></span>
      <span class="tb on"><svg class="t24"><use href="#explorer"/></svg></span>
      <span class="tb on act"><svg class="t26"><use href="#firefox"/></svg></span>
      <span class="tb on"><svg class="t24"><use href="#sublime"/></svg></span>
      <span class="tb on"><svg class="t24"><use href="#spotify"/></svg></span>
      <span class="tb on"><svg class="t24"><use href="#arduino"/></svg></span>
      <span class="tb on"><svg class="t26"><use href="#chrome"/></svg></span>
      <span class="tb on"><svg class="t24"><use href="#arduino"/></svg></span>
      <span class="tb on"><svg class="t26"><use href="#git"/></svg></span>
      <span class="tb on"><svg class="t24" viewBox="0 0 24 24"><rect width="24" height="24" fill="#d7301f"/><rect y="20" width="24" height="4" fill="#a32014"/><text x="12" y="17" class="sy-f">f</text></svg></span>
      <span class="tb on"><svg class="t26" viewBox="0 0 24 26"><path d="M4 1l16 1 2 3v20H5L2 21V3z" fill="#fff" stroke="#111" stroke-width="2"/><text x="13" y="20" class="sy-n">N</text></svg></span>
      <span class="tb on"><svg class="t24"><use href="#arduino"/></svg></span>
      <span class="tb on"><svg class="t26" viewBox="0 0 24 28"><path d="M6 0h18v24l-6 4H0V6z" fill="#10a5e3"/><text x="12" y="20" class="sy-c">C</text></svg></span>
      <span class="tb on"><svg class="t26"><use href="#paint"/></svg></span>
      <div class="tb-tray">
        <svg width="14" height="10"><path d="M1 9l6-7 6 7" fill="none" stroke="#fff"/></svg>
        <svg width="18" height="18"><path d="M1 6h3l4-4v14l-4-4H1zM11 5q3 4 0 8M14 3q4 6 0 12" fill="none" stroke="#fff"/></svg>
        <svg width="18" height="20"><path d="M4 1h13v11H4zM1 4h7v6H1zM10 12v5M5 18h11" fill="none" stroke="#fff"/></svg>
      </div>
      <div class="clock"><span>12:47</span><span>25/07/2022</span></div>
      <svg class="tb-notif" width="18" height="24"><path d="M1 2h16v16h-5l-3 4-3-4H1z" fill="none" stroke="#fff"/></svg>
    </div>
  </section>

  <div class="activate"><span>Activar Windows</span><small>Ve a Configuración para activar Windows.</small></div>
</div>
</body>
</html>
```

FILE: styles.css
```css
* { box-sizing: border-box; }

body {
  margin: 0;
  width: 3840px;
  height: 1080px;
  overflow: hidden;
  background: #fff;
  font-family: "Liberation Sans", Arial, sans-serif;
  color: #333;
}

svg { display: block; flex: none; }
.defs { position: absolute; width: 0; height: 0; }

.screen { display: flex; width: 3840px; height: 1080px; position: relative; }
.half { width: 1920px; height: 1080px; display: flex; flex-direction: column; position: relative; }

/* letters on the taskbar icons */
.sy-f { font: bold 20px "Liberation Serif", serif; fill: #fff; text-anchor: middle; }
.sy-n { font: bold 17px "Liberation Serif", serif; fill: #111; text-anchor: middle; }
.sy-c { font: bold 19px "Liberation Sans", sans-serif; fill: #fff; text-anchor: middle; }

/* icon sizes */
.ic8 { width: 8px; height: 8px; }
.ic10 { width: 10px; height: 10px; }
.ic12 { width: 12px; height: 12px; }
.ic13 { width: 13px; height: 13px; }
.ic14 { width: 14px; height: 14px; }
.ic14b { width: 14px; height: 11px; }
.ic15 { width: 15px; height: 15px; }
.ic16 { width: 16px; height: 16px; }
.ic20 { width: 18px; height: 18px; }
.ic28 { width: 18px; height: 28px; }
.white { color: #fff; }
.c-g { color: #888; }
.c-l { color: #999; }
.c-m { color: #888; }

/* ---------- left half ---------- */
.left { height: 1040px; position: relative; background: #fff; }
.left-upper { height: 862px; display: flex; }
.shot { width: 987px; height: 662px; display: flex; margin-left: 3px; position: relative; overflow: hidden; background: #fff; }
.shot .palette { height: 662px; }
.mark {
  position: absolute;
  left: 5px;
  top: 140px;
  width: 150px;
  height: 47px;
  border: 4px solid #fc0;
  border-radius: 11px;
}
.n-top { flex: 1; position: relative; }
.n-win { display: flex; justify-content: flex-end; gap: 30px; padding: 2px 17px 0 0; }
.n-bar { display: flex; justify-content: flex-end; align-items: center; gap: 15px; margin-top: 17px; padding-right: 16px; color: #555; }
.n-share { font: 15px "Open Sans", sans-serif; margin-right: 3px; }

.left-mid { height: 124px; padding-left: 1576px; }
.n-box { display: block; width: 237px; height: 124px; background: #f7f6f3; }

.left-lower { height: 54px; display: flex; }
.n-side { width: 240px; background: #f7f6f3; }
.n-side-top { height: 9px; border-bottom: 2px solid #e9e9e7; display: flex; justify-content: flex-end; }
.n-side-top span { width: 10px; background: #ccc; }
.n-new { display: flex; align-items: center; gap: 12px; padding: 9px 0 0 14px; font: 14px Inter, sans-serif; color: #9b9a97; }
.n-code { margin-left: 95px; width: 1478px; background: #f7f6f3; padding-left: 64px; overflow: hidden; font: 12.300px/19.500px "Liberation Mono", monospace; color: #555; }
.n-code code { display: block; font: inherit; white-space: pre; }
.n-code code:first-child { margin-top: -8px; }
.mag { color: #905; }
.n-cookie {
  position: absolute;
  left: 736px;
  top: 986px;
  width: 448px;
  height: 30px;
  display: flex;
  align-items: center;
  padding-left: 12px;
  white-space: pre;
  background: #0f0f0f;
  color: #eee;
  border-radius: 0 0 3px 3px;
  box-shadow: 0 10px 26px rgba(0, 0, 0, .2);
  font: 13.600px Inter, sans-serif;
  letter-spacing: -.2px;
}
.n-cookie u { text-underline-offset: 3px; }
.n-cookie b { margin-left: 4px; color: #fff; letter-spacing: -.7px; }
.n-cookie em { margin-left: 20px; font: normal 8px "Liberation Sans", sans-serif; letter-spacing: -1px; }
.n-help {
  position: absolute;
  left: 1859px;
  top: 977px;
  width: 36px;
  height: 37px;
  border-radius: 50%;
  background: #fff;
  box-shadow: 0 0 0 1px rgba(0, 0, 0, .12), 0 2px 4px rgba(0, 0, 0, .15);
  display: flex;
  align-items: center;
  justify-content: center;
  font: 16px Inter, sans-serif;
  color: #444;
}
.n-scroll { position: absolute; left: 1910px; top: 68px; width: 10px; height: 667px; background: #ededed; }

/* ---------- firefox ---------- */
.ff-tabs { height: 44px; background: #f0f0f4; display: flex; padding-left: 2px; font: 12px "Noto Sans", sans-serif; color: #222; }
.tab { width: 225px; height: 36px; margin-top: 4px; display: flex; align-items: center; gap: 8px; padding: 0 14px 0 8px; letter-spacing: -.35px; }
.tab-on { background: #fff; border-radius: 4px; box-shadow: 0 0 4px rgba(0, 0, 0, .25); width: 221px; margin-right: 4px; }
.fav { width: 14px; height: 14px; }
.tab-t { flex: 1; white-space: nowrap; overflow: hidden; -webkit-mask-image: linear-gradient(to left, transparent 0, #000 18px); mask-image: linear-gradient(to left, transparent 0, #000 18px); }
.tab-full { -webkit-mask-image: none; mask-image: none; }
.tab-x { font-size: 10px; width: 10px; }
.tab-add { font: 300 22px "Noto Sans", sans-serif; margin: 6px 0 0 17px; }
.ff-win { margin-left: auto; display: flex; align-items: center; height: 44px; }
.ff-win svg { margin: 0 15px; }

.ff-bar { height: 36px; background: #f9f9fb; display: flex; align-items: center; padding-left: 5px; }
.ff-b { width: 36px; height: 32px; display: flex; align-items: center; justify-content: center; }
.ff-url {
  margin: 4px 0 0 118px;
  width: 1242px;
  height: 32px;
  background: #f0f0f4;
  border-radius: 4px;
  display: flex;
  align-items: center;
  gap: 12px;
  padding-left: 8px;
  font: 13.400px "Noto Sans", sans-serif;
  letter-spacing: -.2px;
  color: #111;
}
.ff-addr { margin-left: -1px; }
.ff-g { color: #777; }
.ff-star { margin-left: auto; margin-right: 7px; }
.ff-exts { display: flex; margin-left: 117px; }
.ff-marks { height: 33px; background: #f9f9fb; border-bottom: 1px solid #ccc; display: flex; align-items: center; padding-left: 13px; gap: 12px; font: 12px "Noto Sans", sans-serif; color: #222; letter-spacing: -.3px; }
.bm { display: flex; align-items: center; gap: 3px; }
.bm-end { margin-left: auto; margin-right: 12px; }

/* ---------- node-red header ---------- */
.nr-head { height: 40px; background: #505050; display: flex; align-items: center; padding-left: 20px; }
.nr-logo { width: 47px; height: 20px; }
.nr-name { margin-left: 5px; font-size: 18px; color: #b4b4b4; }
.nr-deploy { margin-left: 1508px; width: 130px; height: 30px; background: #6e6e6e; display: flex; align-items: center; padding-left: 12px; gap: 10px; color: #8c8c8c; font-size: 14px; }
.nr-deploy span { font-size: 17px; margin-left: 2px; margin-right: 6px; }
.nr-user { margin-left: 37px; }
.nr-menu { margin-left: 39px; }

.nr-main { height: 887px; display: flex; background: #fff; }
.workspace { width: 1080px; display: flex; position: relative; margin-right: 8px; box-shadow: 2px 0 3px rgba(0, 0, 0, .2); }
.shade { position: absolute; inset: 0; background: #888; opacity: .4; }

/* ---------- palette ---------- */
.palette { width: 180px; display: flex; flex-direction: column; background: #fff; border-right: 1px solid #bbb; flex: none; }
.pal-search { height: 35px; flex: none; border-bottom: 1px solid #bbb; display: flex; align-items: center; gap: 6px; padding-left: 12px; font-size: 14px; color: #999; }
.pal-search svg { color: #666; }
.pal-body { flex: 1; display: flex; min-height: 0; }
.pal-list { width: 162px; overflow: hidden; }
.pal-list-r { margin-top: 0; }
.pal-list-r .pal-first { margin-top: -6px; padding-top: 0; }
.pal-group { padding: 18px 0 19px 21px; display: flex; flex-direction: column; gap: 10px; }
.pal-first { padding-top: 4px; }
.pal-head { height: 38px; background: #f3f3f3; border-top: 1px solid #ddd; display: flex; align-items: center; gap: 11px; padding-left: 11px; font-weight: bold; font-size: 14px; color: #555; }
.pal-scroll { width: 17px; background: #f3f3f3; position: relative; }
.pal-thumb { position: absolute; left: 0; width: 17px; background: #ccc; }
.pal-thumb-l { top: 192px; height: 206px; }
.pal-thumb-r { top: 222px; height: 206px; }
.pal-up { position: absolute; left: 3px; top: 4px; color: #666; }
.pal-down { position: absolute; left: 3px; bottom: 2px; color: #666; }
.pal-foot { height: 27px; flex: none; border-top: 1px solid #bbb; background: #f3f3f3; display: flex; justify-content: flex-end; padding: 4px 6px 0 0; }
.pal-fbtn { width: 19px; height: 19px; border: 1px solid #bbb; font-size: 12px; line-height: 16px; text-align: center; color: #888; }

.pn { position: relative; width: 122px; height: 30px; flex: none; border: 1px solid #999; border-radius: 5px; display: flex; font-size: 13px; line-height: 20px; color: #333; }
.pn-ico { width: 30px; flex: none; display: flex; align-items: center; justify-content: center; background: rgba(0, 0, 0, .05); border-right: 1px solid rgba(0, 0, 0, .08); border-radius: 4px 0 0 4px; }
.pn-lab { flex: 1; text-align: center; align-self: center; white-space: nowrap; }
.pn-flip { flex-direction: row-reverse; }
.pn-flip .pn-ico { border-right: 0; border-left: 1px solid rgba(0, 0, 0, .08); border-radius: 0 4px 4px 0; }
.pn-tall { height: 50px; }
.pn-mqtt { background: #d8bfd8; }
.pn-http { background: #e7e7ae; }
.pn-ws { background: #d7d7a0; }
.pn-tcp { background: #c0c0c0; }
.pn-filter { background: #e2d96e; }
.pn-exec { background: #e9967a; }

.port { position: absolute; top: 50%; width: 10px; height: 10px; margin-top: -5px; background: #d9d9d9; border: 1px solid #999; border-radius: 3px; }
.pl { left: -5px; }
.pr { right: -5px; }

/* ---------- canvas ---------- */
.canvas { flex: 1; display: flex; flex-direction: column; min-width: 0; }
.wtabs { height: 35px; flex: none; display: flex; gap: 6px; padding: 4px 0 0 24px; border-bottom: 1px solid #bbb; }
.wtab { width: 180px; height: 31px; padding: 6px 0 0 13px; background: #f0f0f0; border: 1px solid #ddd; border-bottom: 0; font-size: 14px; color: #999; }
.wtab-on { background: #fff; font-weight: bold; color: #666; }
.wtab-cut { width: 133px; }
.flow-wrap { flex: 1; overflow: hidden; min-height: 0; }
.flow {
  position: relative;
  width: 900px;
  height: 809px;
  background-image: linear-gradient(#eee 1px, transparent 1px), linear-gradient(90deg, #eee 1px, transparent 1px);
  background-size: 20px 20px;
  background-position: 0 7px;
}
.flow-wrap-l { flex: 1; height: 662px; padding-left: 1px; }
.flow-white { margin-top: -30px; }
.wires { position: absolute; left: 0; top: 0; }
.wires path { fill: none; stroke: #999; stroke-width: 3; }
.fn { position: absolute; height: 32px; display: flex; background: #a6bbcf; border: 2px solid #ff7f0e; border-radius: 5px; font-size: 14px; font-style: italic; color: #333; }
.fn-out { background: #d8bfd8; }
.fn-ico { width: 29px; flex: none; display: flex; align-items: center; justify-content: center; background: rgba(0, 0, 0, .05); }
.fn-lab { flex: 1; align-self: center; padding-left: 8px; white-space: nowrap; }
.fn-out .fn-lab { text-align: right; padding: 0 7px 0 0; }
.fn-btn { position: absolute; left: -26px; top: 1px; width: 26px; height: 26px; background: #eee; border: 1px solid #999; border-right: 0; border-radius: 4px 0 0 4px; }
.fn-btn i { position: absolute; left: 3px; top: 3px; width: 18px; height: 18px; background: #a6bbcf; border-radius: 3px; }
.fn-status { position: absolute; display: flex; align-items: center; gap: 4px; font-size: 12.500px; line-height: 12px; color: #888; }
.fn-status i { width: 11px; height: 11px; background: #5a8; border-radius: 2px; }
.hscroll { height: 16px; flex: none; background: #f3f3f3; display: flex; align-items: center; padding-left: 3px; color: #666; }
.hscroll span { display: block; width: 324px; height: 16px; margin-left: 4px; background: #ccc; }
.wfoot { height: 27px; flex: none; background: #f3f3f3; border-top: 1px solid #bbb; }

/* ---------- tray ---------- */
.tray { width: 509px; flex: none; display: flex; flex-direction: column; border-left: 1px solid #bbb; background: #fff; }
.tray-title { height: 36px; flex: none; padding: 11px 0 0 8px; background: #f3f3f3; border-bottom: 1px solid #ccc; font-weight: bold; font-size: 14px; color: #444; }
.tray-tools { height: 48px; flex: none; display: flex; align-items: flex-start; padding: 7px 14px 0 6px; background: #f3f3f3; border-bottom: 1px solid #ccc; }
.btn { height: 34px; border: 1px solid #ccc; background: #fff; font: 14px "Liberation Sans", sans-serif; color: #888; padding: 0; }
.btn-del { width: 71px; margin-top: 1px; }
.btn-can { width: 74px; margin-left: auto; }
.btn-done { width: 64px; margin-left: 16px; background: #ad1625; border-color: #ad1625; color: #fff; }
.tray-tabs { height: 35px; flex: none; display: flex; align-items: flex-end; border-bottom: 1px solid #bbb; padding-left: 3px; position: relative; }
.ttab { width: 200px; height: 32px; margin-bottom: -1px; background: #fff; border: 1px solid #bbb; border-bottom: 0; display: flex; align-items: center; gap: 7px; padding: 0 0 2px 12px; font-weight: bold; font-size: 14px; color: #555; }
.tico { width: 28px; height: 28px; border: 1px solid #ccc; background: #fff; display: flex; align-items: center; justify-content: center; color: #666; }
.tray-tabs .tico { margin: 0 0 2px 6px; }
.tray-tabs .tico:nth-child(2) { margin-left: auto; }
.tray-tabs .tico:last-child { margin-right: 3px; }
.tico-on { background: #e9e9e9; border-color: #ddd; border-bottom: 2px solid #aaa; }
.tray-body { flex: 1; padding: 26px 20px 0; min-height: 0; }
.frow { display: flex; align-items: center; height: 34px; margin-bottom: 12px; font-size: 14px; color: #555; }
.frow label { width: 104px; display: flex; align-items: center; gap: 4px; flex: none; margin-top: -2px; }
.frow label.lab-ret { width: 150px; padding-left: 46px; }
.sel { height: 34px; border: 1px solid #ccc; border-radius: 4px; display: flex; align-items: center; justify-content: space-between; padding: 0 6px 0 10px; color: #555; }
.sel svg { color: #444; }
.sel-server { width: 284px; }
.sel-sm { width: 89px; }
.edit { width: 34px; height: 34px; margin-left: 10px; border: 1px solid #ccc; border-radius: 2px; display: flex; align-items: center; justify-content: center; }
.inp { width: 328px; height: 34px; border: 1px solid #ccc; border-radius: 4px; padding: 0 6px; font: 14px "Liberation Sans", sans-serif; color: #555; }
.tip { width: 468px; height: 57px; padding: 9px 8px; background: #ffe; border: 1px solid #ddd; border-radius: 2px; font-size: 14px; line-height: 20px; color: #666; }
.tray-foot { height: 37px; flex: none; background: #f3f3f3; border-top: 1px solid #bbb; padding: 6px 6px; }
.en-btn { display: flex; align-items: center; gap: 8px; width: 87px; height: 26px; padding-left: 8px; border: 1px solid #ccc; border-radius: 2px; font-size: 14px; color: #666; }
.en-btn i { width: 11px; height: 11px; border: 1px solid #666; border-radius: 50%; }

/* ---------- sidebar ---------- */
.side-sep { width: 9px; flex: none; background: #f3f3f3; border-left: 1px solid #bbb; border-right: 1px solid #bbb; position: relative; }
.side-sep span { position: absolute; left: 2px; top: 416px; width: 3px; height: 50px; background: #ccc; }
.sidebar { flex: 1; display: flex; flex-direction: column; min-width: 0; background: #fff; }
.sb-tabs { height: 35px; flex: none; display: flex; align-items: center; padding-left: 3px; gap: 6px; border-bottom: 1px solid #bbb; position: relative; }
.sb-tab { width: 133px; height: 31px; margin: 4px 4px -1px 0; background: #fff; border: 1px solid #bbb; border-bottom: 0; display: flex; align-items: center; gap: 14px; padding-left: 12px; font-weight: bold; font-size: 14px; color: #555; }
.i-i { font-family: "Liberation Serif", serif; color: #666; }
.sb-caret { margin-left: 15px; color: #888; }
.sb-search { height: 40px; flex: none; display: flex; justify-content: flex-end; align-items: flex-start; padding: 7px 10px 0 0; background: #f3f3f3; border-bottom: 1px solid #ddd; }
.sb-box { width: 182px; height: 26px; background: #fff; border: 1px solid #ddd; border-radius: 4px; display: flex; align-items: center; gap: 6px; padding-left: 7px; font-size: 13px; color: #aaa; }
.sb-box svg { color: #777; }
.sb-caret2 { margin-left: auto; margin-right: 4px; }
.sb-tree { height: 361px; flex: none; display: flex; background: #f7f7f7; }
.tree { flex: 1; font-size: 14px; color: #555; }
.t-top { height: 24px; display: flex; align-items: center; gap: 9px; padding-left: 5px; background: #fff; }
.t-top:nth-child(9) { height: 23.500px; }
.t-top:nth-child(10) { height: 23.500px; }
.t-flow { height: 26px; display: flex; align-items: center; padding-left: 25px; background: #fff; }
.t-flow .ic15 { margin: 0 7px 0 3px; color: #888; }
.sb-vs { width: 18px; flex: none; background: #f0f0f0; display: flex; flex-direction: column; justify-content: space-between; align-items: center; padding: 4px 0; color: #666; }
.sb-split { height: 6px; flex: none; background: #f3f3f3; border-top: 1px solid #ddd; border-bottom: 1px solid #ddd; position: relative; }
.sb-split span { position: absolute; left: 132px; top: 0; width: 50px; height: 3px; background: #ccc; }
.sb-nhead { height: 47px; flex: none; display: flex; align-items: center; padding: 0 10px 0 14px; border-bottom: 2px solid #ddd; font-size: 14px; color: #444; }
.sb-nhead b { flex: 1; margin-left: 6px; letter-spacing: .3px; }
.sb-nico { width: 26px; height: 22px; background: #d8bfd8; border: 1px solid #999; border-radius: 4px; display: flex; align-items: center; justify-content: center; }
.sb-nico .ic28 { height: 20px; }
.sb-nbtn { width: 20px; height: 20px; margin-left: 4px; border: 1px solid #ccc; border-radius: 2px; display: flex; align-items: center; justify-content: center; }
.sb-props { height: 222px; flex: none; display: flex; }
.props { flex: 1; font-size: 14px; color: #555; }
.prow { display: flex; height: 29px; border-bottom: 1px solid #ddd; align-items: center; }
.prow span:first-child { width: 99px; height: 100%; padding: 6px 0 0 6px; background: #f7f7f7; border-right: 1px solid #ddd; }
.prow span:last-child { padding-left: 7px; }
.red { color: #ad1625; }
.more { display: flex; justify-content: flex-end; align-items: center; gap: 4px; padding: 9px 3px 0 0; font-size: 11.500px; }
.sb-tips { height: 149px; flex: none; border-top: 1px solid #ccc; position: relative; }
.tips-btns { position: absolute; right: 8px; top: 5px; display: flex; gap: 4px; }
.tips-btns span { width: 18px; height: 19px; border: 1px solid #ddd; font-size: 11px; line-height: 16px; text-align: center; color: #666; }
.sb-tips p { margin: 44px 0 0; font-size: 15.500px; line-height: 30px; text-align: center; color: #aaa; }
.sb-foot { height: 27px; flex: none; background: #f3f3f3; border-top: 1px solid #bbb; }

.activate { position: absolute; left: 3482px; top: 943px; font-family: "Open Sans", sans-serif; font-weight: 300; color: rgba(90, 90, 90, .45); pointer-events: none; }
.activate span { display: block; font-size: 20.500px; line-height: 30px; }
.activate small { display: block; font-size: 13px; line-height: 19px; margin-top: 3px; }

/* ---------- taskbar ---------- */
.taskbar { height: 40px; flex: none; background: #1c1c1c; display: flex; align-items: center; color: #fff; position: relative; }
.tb { width: 49px; height: 40px; flex: none; display: flex; align-items: center; justify-content: center; position: relative; }
.tb-w { width: 48px; }
.tb-w-s { color: #fff; }
.tb.on::after { content: ""; position: absolute; left: 4px; right: 5px; bottom: 0; height: 2px; background: #76b9ed; }
.tb.act { background: #4a4a4a; }
.tb.act::after { left: 0; right: 0; }
.t20 { width: 20px; height: 20px; }
.t24 { width: 24px; height: 24px; }
.t26 { width: 26px; height: 27px; }
.tb-search { width: 344px; height: 40px; flex: none; display: flex; align-items: center; gap: 6px; padding-left: 11px; background: #f2f2f2; color: #222; font: 14px "Noto Sans", sans-serif; letter-spacing: -.3px; position: relative; }
.tb-coral { position: absolute; right: 10px; top: 0; }
.clock { display: flex; flex-direction: column; align-items: center; font: 12px/18px "Noto Sans", sans-serif; letter-spacing: -.3px; width: 66px; }
.clock-l { margin-left: auto; margin-right: 4px; }
.tb-tray { display: flex; align-items: center; gap: 7px; margin-left: auto; margin-right: 8px; }
.tb-notif { margin: 0 24px 0 22px; }
```
